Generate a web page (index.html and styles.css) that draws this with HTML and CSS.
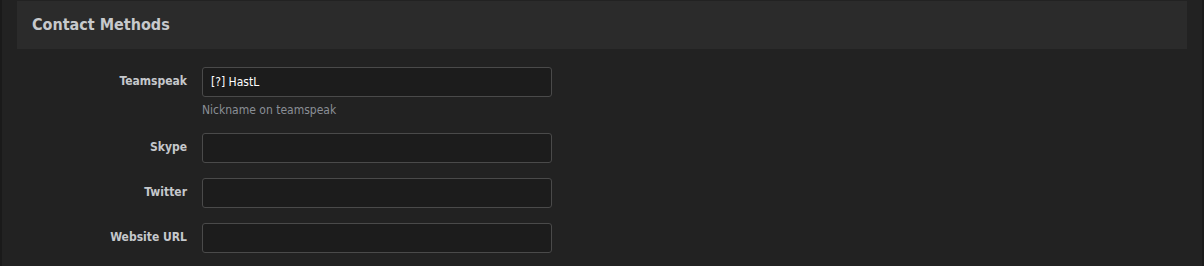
FILE: index.html
```html
<!DOCTYPE html>
<html lang="en">
<head>
    <meta charset="UTF-8">
    <title>Contact Methods</title>
    <link rel="stylesheet" href="styles.css">
</head>
<body>
    <div class="page">
        <div class="block">
            <h3 class="block-header">Contact Methods</h3>
            <form class="form">
                <div class="row">
                    <label class="label" for="ts">Teamspeak</label>
                    <div class="field">
                        <input class="input" id="ts" type="text" value="[?] HastL">
                        <p class="hint">Nickname on teamspeak</p>
                    </div>
                </div>
                <div class="row">
                    <label class="label" for="skype">Skype</label>
                    <div class="field"><input class="input" id="skype" type="text"></div>
                </div>
                <div class="row">
                    <label class="label" for="twitter">Twitter</label>
                    <div class="field"><input class="input" id="twitter" type="text"></div>
                </div>
                <div class="row">
                    <label class="label" for="url">Website URL</label>
                    <div class="field"><input class="input" id="url" type="text"></div>
                </div>
            </form>
        </div>
    </div>
</body>
</html>
```

FILE: styles.css
```css
html, body {
    margin: 0;
    padding: 0;
    height: 100%;
}
body {
    background-color: #1a1a1a;
    font-family: 'DejaVu Sans Condensed', 'DejaVu Sans', sans-serif;
    overflow: hidden;
}
.page {
    margin: 0 2px;
    height: 100%;
    background-color: #222222;
}
.block {
    padding: 1px 15px 0 15px;
}
.block-header {
    margin: 0;
    height: 48px;
    line-height: 48px;
    padding-left: 15px;
    background-color: #2b2b2b;
    color: #c7c9cc;
    font-size: 16px;
    font-weight: bold;
}
.form {
    padding-top: 18px;
}
.row {
    display: flex;
    margin-bottom: 15px;
}
.label {
    width: 170px;
    flex: none;
    text-align: right;
    padding: 5px 15px 0 0;
    font-size: 12px;
    font-weight: bold;
    line-height: 18px;
    color: #c5c8cc;
}
.field {
    width: 350px;
}
.input {
    box-sizing: border-box;
    display: block;
    width: 350px;
    height: 30px;
    margin: 0;
    padding: 0 8px;
    background-color: #1c1c1c;
    border: 1px solid #4a4a4a;
    border-radius: 3px;
    color: #ffffff;
    font-family: 'DejaVu Sans Condensed', 'DejaVu Sans', sans-serif;
    font-size: 12px;
    outline: none;
}
.hint {
    margin: 5px 0 0;
    font-size: 12px;
    line-height: 16px;
    color: #8a8f96;
}
```
